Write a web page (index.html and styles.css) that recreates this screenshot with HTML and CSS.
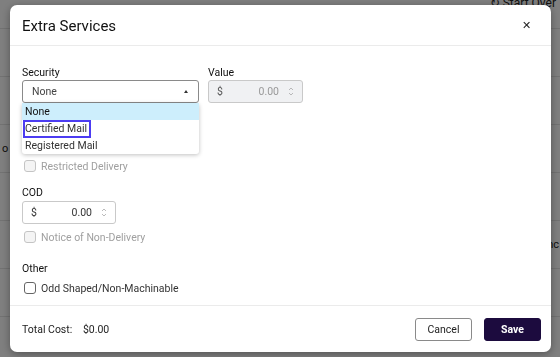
FILE: index.html
```html
<!DOCTYPE html>
<html lang="en">
<head>
    <meta charset="UTF-8">
    <meta name="viewport" content="width=device-width, initial-scale=1.0">
    <title>Extra Services</title>
    <link rel="stylesheet" href="styles.css">
</head>
<body>

    <!-- Page behind the modal -->
    <div class="page">
        <div class="page-top">
            <span class="start-over">&#x21BB; Start Over</span>
        </div>
        <div class="page-row"></div>
        <div class="page-row"></div>
        <div class="page-row"><span class="cell-o">o</span></div>
        <div class="page-row"></div>
        <div class="page-row"><span class="cell-right">nc</span></div>
        <div class="page-row"></div>
    </div>

    <div class="overlay">
        <div class="modal">
            <div class="modal-header">
                <h2>Extra Services</h2>
                <span class="close">&#x2715;</span>
            </div>

            <div class="modal-body">
                <div class="field-row">
                    <div class="field security">
                        <label>Security</label>
                        <div class="select">
                            <span>None</span>
                            <span class="caret"></span>
                        </div>
                        <!-- open dropdown -->
                        <ul class="dropdown">
                            <li class="active">None</li>
                            <li><span class="focused">Certified Mail</span></li>
                            <li>Registered Mail</li>
                        </ul>
                    </div>
                    <div class="field value">
                        <label>Value</label>
                        <div class="money disabled">
                            <span>$</span>
                            <span class="amount">0.00</span>
                            <svg class="spin" width="6" height="11" viewBox="0 0 6 11"><path d="M1 4 L3 2 L5 4 M1 7 L3 9 L5 7" fill="none" stroke="currentColor" stroke-width="0.8"/></svg>
                        </div>
                    </div>
                </div>

                <div class="check disabled first-check">
                    <span class="box"></span> Restricted Delivery
                </div>

                <div class="section">
                    <label>COD</label>
                    <div class="money cod">
                        <span>$</span>
                        <span class="amount">0.00</span>
                        <svg class="spin" width="6" height="11" viewBox="0 0 6 11"><path d="M1 4 L3 2 L5 4 M1 7 L3 9 L5 7" fill="none" stroke="currentColor" stroke-width="0.8"/></svg>
                    </div>
                    <div class="check disabled">
                        <span class="box"></span> Notice of Non-Delivery
                    </div>
                </div>

                <div class="section other">
                    <label>Other</label>
                    <div class="check">
                        <span class="box"></span> Odd Shaped/Non-Machinable
                    </div>
                </div>
            </div>

            <div class="modal-footer">
                <div class="total"><span>Total Cost:</span> <span class="total-value">$0.00</span></div>
                <div class="buttons">
                    <button class="btn cancel">Cancel</button>
                    <button class="btn save">Save</button>
                </div>
            </div>
        </div>
    </div>

</body>
</html>
```

FILE: styles.css
```css
body {
    font-family: Roboto, "Noto Sans", sans-serif;
    margin: 0;
    padding: 0;
    background-color: #fff;
    color: #222;
    overflow: hidden;
}
.page {
    height: 357px;
}
.page-top {
    height: 28px;
    border-bottom: 1px solid #e4e4e4;
    display: flex;
    justify-content: flex-end;
}
.start-over {
    margin-top: -4px;
    margin-right: 4px;
    font-size: 12px;
    line-height: 14px;
    color: #222;
}
.page-row {
    height: 47px;
    border-bottom: 1px solid #e4e4e4;
    display: flex;
    align-items: center;
    justify-content: space-between;
    font-size: 11px;
}
.cell-o {
    margin-left: 2px;
}
.cell-right {
    margin-left: auto;
    margin-right: 1px;
}
.overlay {
    position: fixed;
    inset: 0;
    background: rgba(0, 0, 0, 0.5);
    padding: 5px 0 0 10px;
}
.modal {
    width: 541px;
    height: 347px;
    background: white;
    border-radius: 7px;
    box-shadow: 0 2px 8px rgba(0, 0, 0, 0.35);
    display: flex;
    flex-direction: column;
}
.modal-header {
    height: 41px;
    box-sizing: border-box;
    padding: 1px 20px 0 12px;
    border-bottom: 1px solid #ebebeb;
    display: flex;
    align-items: center;
    justify-content: space-between;
}
.modal-header h2 {
    margin: 0;
    font-size: 15px;
    font-weight: 400;
    color: #111;
}
.close {
    font-size: 11px;
    color: #222;
}
.modal-body {
    flex: 1;
    padding: 20px 12px 0 12px;
    font-size: 10.5px;
}
label {
    display: block;
    font-size: 10.5px;
    line-height: 14px;
    color: #111;
}
.field-row {
    display: flex;
    gap: 9px;
}
.security {
    width: 177px;
    position: relative;
}
.value {
    width: 95px;
}
.select {
    height: 23px;
    box-sizing: border-box;
    border: 1px solid #8a8a8a;
    border-radius: 3px;
    display: flex;
    align-items: center;
    justify-content: space-between;
    padding: 0 10px 0 9px;
    color: #444;
}
.caret {
    border-left: 2px solid transparent;
    border-right: 2px solid transparent;
    border-bottom: 3px solid #333;
}
.dropdown {
    position: absolute;
    top: 37px;
    left: 0;
    right: 0;
    margin: 0;
    padding: 0;
    list-style: none;
    background: white;
    border-radius: 3px;
    box-shadow: 0 1px 4px rgba(0, 0, 0, 0.25);
    color: #333;
    z-index: 2;
}
.dropdown li {
    height: 17px;
    line-height: 17px;
    padding: 0 3px;
}
.dropdown li.active {
    background: #cdeefc;
    color: #111;
}
.focused {
    display: inline-block;
    outline: 2px solid #4c3cf2;
    outline-offset: 0;
    line-height: 14px;
    padding-right: 2px;
}
.money {
    height: 23px;
    box-sizing: border-box;
    border: 1px solid #c9c9c9;
    border-radius: 3px;
    display: flex;
    align-items: center;
    padding: 0 8px 0 8px;
    color: #333;
}
.money .amount {
    margin-left: auto;
    margin-right: 9px;
}
.money.disabled {
    background: #f0f1f3;
    color: #999;
}
.money.disabled span:first-child {
    color: #555;
}
.spin {
    color: #aaa;
}
.cod {
    width: 94px;
}
.check {
    display: flex;
    align-items: center;
    gap: 5px;
    height: 14px;
    margin-left: 2px;
    color: #333;
}
.check .box {
    width: 12px;
    height: 12px;
    box-sizing: border-box;
    border: 1px solid #666;
    border-radius: 3px;
}
.check.disabled {
    color: #a0a0a0;
}
.check.disabled .box {
    border-color: #c4c4c4;
    background: #f4f4f4;
}
.first-check {
    margin-top: 56px;
}
.section {
    margin-top: 13px;
}
.section .money {
    margin-top: 1px;
}
.section .check {
    margin-top: 6px;
}
.other {
    margin-top: 18px;
}
.other .check {
    margin-top: 5px;
}
.modal-footer {
    height: 46px;
    border-top: 1px solid #ebebeb;
    display: flex;
    align-items: center;
    justify-content: space-between;
    padding: 0 10px 0 12px;
    font-size: 10.5px;
}
.total-value {
    margin-left: 8px;
}
.buttons {
    display: flex;
    gap: 12px;
}
.btn {
    width: 57px;
    height: 23px;
    border-radius: 3px;
    font-family: Roboto, "Noto Sans", sans-serif;
    font-size: 10.5px;
}
.cancel {
    background: white;
    border: 1px solid #8a8a8a;
    color: #222;
}
.save {
    background: #1c0b3e;
    border: 1px solid #1c0b3e;
    color: white;
    font-weight: 700;
}
```
